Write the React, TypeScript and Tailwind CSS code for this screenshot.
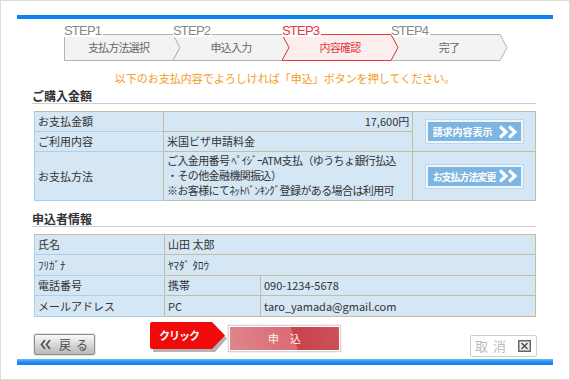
const steps = [
  { no: "STEP1", name: "支払方法選択" },
  { no: "STEP2", name: "申込入力" },
  { no: "STEP3", name: "内容確認", active: true },
  { no: "STEP4", name: "完了" },
];

const Chevrons = ({ color = "#ffffff", w = 22 }: { color?: string; w?: number }) => (
  <svg width={w} height="14" viewBox="0 0 22 14">
    <polyline points="2,1.5 8,7 2,12.5" fill="none" stroke={color} strokeWidth="3.2" />
    <polyline points="11,1.5 17,7 11,12.5" fill="none" stroke={color} strokeWidth="3.2" />
  </svg>
);

const Step = ({
  no,
  name,
  active,
  first,
}: {
  no: string;
  name: string;
  active?: boolean;
  first: boolean;
}) => {
  const points = first
    ? "0.5,0.5 109,0.5 116,13.5 109,26.5 0.5,26.5"
    : "0,0.5 109,0.5 116,13.5 109,26.5 0,26.5 7,13.5";
  return (
    <div className={`relative h-[40px] w-[109px] ${active ? "z-10" : ""}`}>
      <svg className="absolute left-0 top-[12px] overflow-visible" width="117" height="27">
        <polygon
          points={points}
          fill={active ? "#fdeeee" : "#f3f3f3"}
          stroke={active ? "#e5383e" : "#b3b3b3"}
          strokeWidth="1"
        />
      </svg>
      <span
        className={`absolute left-0 top-[2px] bg-white pr-[2px] font-['Liberation_Sans',sans-serif] text-[13px] leading-[13px] tracking-[-0.8px] ${
          active ? "text-[#e5383e]" : "text-[#888]"
        }`}
      >
        {no}
      </span>
      <div
        className={`absolute left-0 top-[12px] flex h-[27px] w-[109px] items-center justify-center text-[11px] tracking-[-0.8px] ${
          first ? "" : "pl-[7px]"
        } ${active ? "text-[#e5383e]" : "text-[#666]"}`}
      >
        {name}
      </div>
    </div>
  );
};

const BlueButton = ({ label, tight }: { label: string; tight?: boolean }) => (
  <div className="flex h-[23px] w-[97px] items-center justify-between border-2 border-[#eef5fc] bg-[#7db5e2] pl-[5px] pr-[1px] shadow-[0_0_0_1px_#bcd6ec]">
    <span className={`whitespace-nowrap text-[10px] font-bold text-white ${tight ? "tracking-[-1px]" : ""}`}>
      {label}
    </span>
    <Chevrons />
  </div>
);

const labelCell = "border-b border-r border-b-[#a9cfee] border-r-[#c6bca0] px-[3px] whitespace-nowrap";
const valueCell = "border-b border-r border-[#c6bca0] px-[3px] whitespace-nowrap";

export default function App() {
  return (
    <div className="h-[380px] w-[570px] border border-[#dcdcdc] bg-white font-['Noto_Sans_CJK_JP',sans-serif] text-[#333]">
      <div className="ml-[16px] mt-[14px] h-[4px] w-[536px] bg-[#0b84f3]" />

      {/* steps */}
      <div className="ml-[63px] mt-[3px] flex h-[40px]">
        {steps.map((s, i) => (
          <Step key={s.no} no={s.no} name={s.name} active={s.active} first={i === 0} />
        ))}
      </div>

      <p className="mt-[9px] text-center text-[11px] leading-[14px] text-[#f39a22]">
        以下のお支払内容でよろしければ「申込」ボタンを押してください。
      </p>

      <h2 className="ml-[31px] mt-[3px] h-[16px] w-[504px] border-b border-[#cfcfcf] text-[12px] font-bold leading-[15px]">
        ご購入金額
      </h2>

      {/* purchase table */}
      <div className="ml-[33px] mt-[7px] flex w-[502px] border-l border-t border-l-[#a9cfee] border-t-[#c6bca0] bg-[#d5e6f5] text-[11px]">
        <div className="flex w-[379px] flex-col">
          <div className="flex h-[20px]">
            <div className={`${labelCell} flex w-[129px] items-center`}>お支払金額</div>
            <div className={`${valueCell} flex flex-1 items-center justify-end`}>17,600円</div>
          </div>
          <div className="flex h-[20px]">
            <div className={`${labelCell} flex w-[129px] items-center`}>ご利用内容</div>
            <div className={`${valueCell} flex flex-1 items-center`}>米国ビザ申請料金</div>
          </div>
          <div className="flex h-[49px]">
            <div className={`${labelCell} flex w-[129px] items-center`}>お支払方法</div>
            <div className={`${valueCell} flex-1 overflow-hidden pt-[1px] leading-[15px] tracking-[-0.6px]`}>
              <div>ご入金用番号 ﾍﾟｲｼﾞｰATM支払（ゆうちょ銀行払込</div>
              <div>・その他金融機関振込）</div>
              <div>※お客様にてﾈｯﾄﾊﾞﾝｷﾝｸﾞ登録がある場合は利用可</div>
            </div>
          </div>
        </div>
        <div className="flex w-[123px] flex-col">
          <div className="flex h-[40px] items-center justify-center border-b border-r border-[#c6bca0]">
            <BlueButton label="請求内容表示" />
          </div>
          <div className="flex h-[49px] items-center justify-center border-b border-r border-[#c6bca0]">
            <BlueButton label="お支払方法変更" tight />
          </div>
        </div>
      </div>

      <h2 className="ml-[31px] mt-[10px] h-[16px] w-[504px] border-b border-[#cfcfcf] text-[12px] font-bold leading-[15px]">
        申込者情報
      </h2>

      {/* applicant table */}
      <div className="ml-[33px] mt-[7px] w-[502px] border-l border-t border-l-[#a9cfee] border-t-[#c6bca0] bg-[#d5e6f5] text-[11px]">
        <div className="flex h-[20px]">
          <div className={`${labelCell} flex w-[130px] items-center`}>氏名</div>
          <div className={`${valueCell} flex flex-1 items-center`}>山田 太郎</div>
        </div>
        <div className="flex h-[21px]">
          <div className={`${labelCell} flex w-[130px] items-center`}>ﾌﾘｶﾞﾅ</div>
          <div className={`${valueCell} flex flex-1 items-center`}>ﾔﾏﾀﾞ ﾀﾛｳ</div>
        </div>
        <div className="flex h-[20px]">
          <div className={`${labelCell} flex w-[130px] items-center`}>電話番号</div>
          <div className={`${valueCell} flex w-[96px] items-center`}>携帯</div>
          <div className={`${valueCell} flex flex-1 items-center`}>090-1234-5678</div>
        </div>
        <div className="flex h-[21px]">
          <div className={`${labelCell} flex w-[130px] items-center`}>メールアドレス</div>
          <div className={`${valueCell} flex w-[96px] items-center`}>PC</div>
          <div className={`${valueCell} flex flex-1 items-center`}>taro_yamada@gmail.com</div>
        </div>
      </div>

      {/* action buttons */}
      <div className="ml-[33px] flex h-[42px] w-[503px] items-start">
        <button className="mt-[17px] flex h-[21px] w-[61px] items-center gap-[8px] whitespace-nowrap rounded-[2px] border border-[#8e8e8e] bg-gradient-to-b from-[#fafafa] to-[#b8b8b8] pl-[5px] text-[12px] leading-[14px] text-[#4a4a4a] shadow-[0_0_0_1px_#e6e6e6]">
          <svg width="11" height="11" viewBox="0 0 11 11">
            <polyline points="5,1 1.5,5.5 5,10" fill="none" stroke="#555" strokeWidth="1.8" />
            <polyline points="10,1 6.5,5.5 10,10" fill="none" stroke="#555" strokeWidth="1.8" />
          </svg>
          <span className="flex gap-[5px]">
            <span>戻</span>
            <span>る</span>
          </span>
        </button>

        <div className="relative ml-[55px] mt-[5px] h-[31px] w-[78px]">
          <svg className="absolute left-0 top-0" width="78" height="31">
            <polygon points="3,3 65,3 77,16.5 65,30 3,30" fill="#b4b4b4" />
            <path d="M2,0 H62 L75,13.5 L62,27 H2 Q0,27 0,25 V2 Q0,0 2,0 Z" fill="#f00a0a" />
          </svg>
          <span className="absolute left-[9px] top-[6px] whitespace-nowrap text-[11px] font-bold leading-[14px] tracking-[-1px] text-white">
            クリック
          </span>
        </div>

        <button className="mt-[8px] h-[27px] w-[113px] border border-[#d6d6d6] p-[1px] shadow-[0_0_0_1px_#f2f2f2]">
          <div className="flex h-full w-full items-center justify-center bg-[linear-gradient(72deg,#e0868c_0%,#d96c73_58%,#c8434c_59%,#cd525a_100%)] text-[11px] text-[#fdf0f0]">
            <span className="flex gap-[11px]">
              <span>申</span>
              <span>込</span>
            </span>
          </div>
        </button>

        <button className="ml-auto mt-[18px] flex h-[22px] w-[67px] items-center justify-between whitespace-nowrap rounded-[2px] border border-[#cfcfcf] bg-white pl-[4px] pr-[5px] text-[13px] text-[#bbb]">
          <span className="flex gap-[5px]">
            <span>取</span>
            <span>消</span>
          </span>
          <svg width="13" height="12" viewBox="0 0 13 12">
            <rect x="0.75" y="0.75" width="11.5" height="10.5" fill="#eee" stroke="#666" strokeWidth="1.5" />
            <path d="M3.5 3 L9.5 9 M9.5 3 L3.5 9" stroke="#555" strokeWidth="1.6" />
          </svg>
        </button>
      </div>

      <div className="ml-[16px] h-[6px] w-[536px] bg-gradient-to-b from-[#6bb8f7] via-[#1d8cf0] to-[#157fe6]" />
    </div>
  );
}
